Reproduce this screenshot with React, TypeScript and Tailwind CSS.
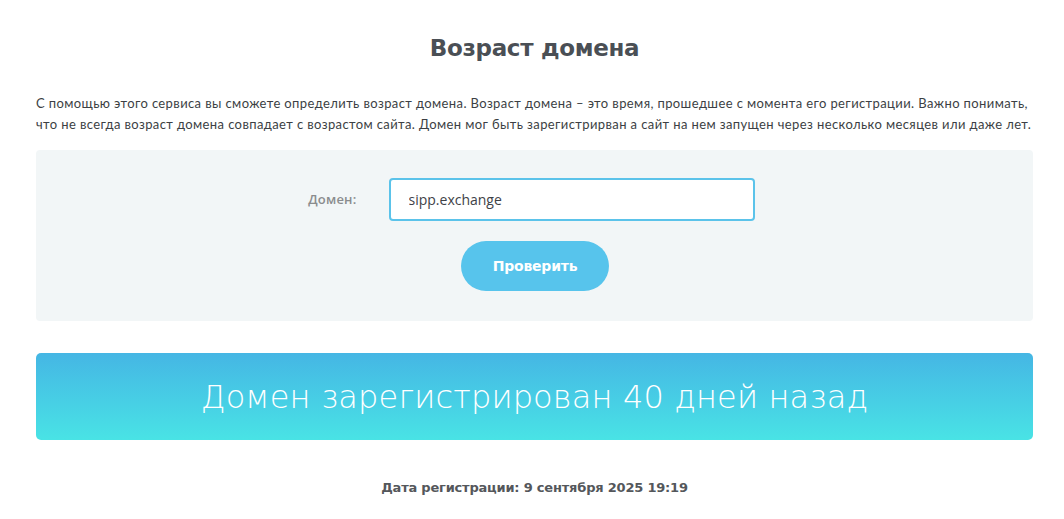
import React from 'react';

const App = () => {
    return (
        <div className="w-[1064px] min-h-[519px] bg-white font-['Open_Sans',sans-serif]">
            <div className="ml-[36px] w-[997px] pt-[33px]">
                <h1 className="text-center font-['DejaVu_Sans',sans-serif] text-[23px] leading-[30px] font-bold text-[#4a4f55] tracking-[-0.3px]">
                    Возраст домена
                </h1>

                <p className="mt-[30px] text-[13px] leading-[21px] text-[#3c3f44] font-['Lato',sans-serif] tracking-[0.39px]">
                    С помощью этого сервиса вы сможете определить возраст домена. Возраст домена – это время, прошедшее с момента его регистрации. Важно понимать,
                    <br />
                    что не всегда возраст домена совпадает с возрастом сайта. Домен мог быть зарегистрирван а сайт на нем запущен через несколько месяцев или даже лет.
                </p>

                {/* Форма проверки */}
                <div className="mt-[15px] h-[171px] bg-[#f2f6f7] rounded-[4px] flex flex-col items-center pt-[28px]">
                    <div className="flex items-center pr-[18px]">
                        <label className="w-[60px] mr-[32px] text-right text-[13px] font-semibold text-[#8a8c8e] font-['Open_Sans',sans-serif] tracking-[0.2px]">
                            Домен:
                        </label>
                        <input
                            type="text"
                            defaultValue="sipp.exchange"
                            className="w-[366px] h-[43px] px-[18px] bg-white border-2 border-[#5bc3ea] rounded-[4px] text-[14px] font-medium text-[#3e4247] outline-none font-['Open_Sans',sans-serif]"
                        />
                    </div>
                    <button className="mt-[20px] ml-[1px] w-[148px] h-[50px] rounded-full bg-[#57c4ec] text-white text-[14px] font-bold font-['DejaVu_Sans',sans-serif] tracking-[-0.2px]">
                        Проверить
                    </button>
                </div>

                {/* Результат */}
                <div className="mt-[32px] h-[87px] rounded-[5px] bg-gradient-to-b from-[#45b6e4] to-[#49e3e5] flex items-center justify-center">
                    <span className="text-white text-[32px] font-['DejaVu_Sans',sans-serif] font-light tracking-[0.15px]">
                        Домен зарегистрирован 40 дней назад
                    </span>
                </div>

                <div className="mt-[38px] text-center text-[13px] font-bold text-[#54575b] font-['DejaVu_Sans',sans-serif] tracking-[-0.2px]">
                    Дата регистрации: 9 сентября 2025 19:19
                </div>
            </div>
        </div>
    );
};

export default App;
